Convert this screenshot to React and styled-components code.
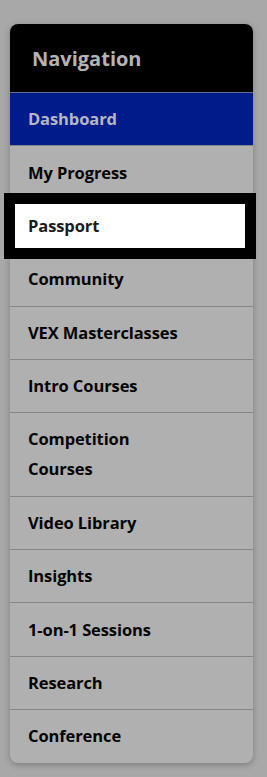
import React from 'react';
import styled, { createGlobalStyle } from 'styled-components';

const GlobalStyle = createGlobalStyle`
  html, body {
    margin: 0;
    padding: 0;
    background: #a8a8a8;
  }
  body {
    font-family: "Open Sans", "Liberation Sans", sans-serif;
  }
`;

const Page = styled.div`
  padding: 24px 14px 14px 10px;
`;

const Card = styled.nav`
  width: 243px;
  border-radius: 8px;
  background: #b0b0b0;
  box-shadow: 0 2px 6px rgba(0, 0, 0, 0.25);
`;

const Header = styled.div`
  height: 69px;
  display: flex;
  align-items: center;
  padding-left: 22px;
  background: #000;
  color: #b4b4b4;
  font-size: 20px;
  font-weight: 700;
  border-radius: 8px 8px 0 0;
  border-bottom: 1px solid #6a6a8a;
  box-sizing: border-box;
`;

const List = styled.ul`
  list-style: none;
  margin: 0;
  padding: 0;
`;

const Item = styled.li`
  position: relative;
  padding: 11.2px 60px 11.2px 18px;
  line-height: 30px;
  font-size: 16.5px;
  font-weight: 700;
  letter-spacing: -0.1px;
  color: ${({ active }) => (active ? '#b6b6c2' : '#050505')};
  background: ${({ active }) => (active ? '#001c8a' : 'transparent')};
  border-bottom: ${({ last }) => (last ? 'none' : '1px solid #858585')};
  border-radius: ${({ last }) => (last ? '0 0 8px 8px' : '0')};
`;

const Spotlight = styled.div`
  position: absolute;
  top: 4px;
  bottom: 4px;
  left: 5px;
  right: 8px;
  background: #fff;
  outline: 11px solid #000;
  display: flex;
  align-items: center;
  padding-left: 13px;
  color: #1c1c1c;
`;

const links = [
  'Dashboard',
  'My Progress',
  'Passport',
  'Community',
  'VEX Masterclasses',
  'Intro Courses',
  'Competition Courses',
  'Video Library',
  'Insights',
  '1-on-1 Sessions',
  'Research',
  'Conference'
];

const App = () => (
  <>
    <GlobalStyle />
    <Page>
      <Card>
        <Header>Navigation</Header>
        <List>
          {links.map((label, i) => (
            <Item key={label} active={i === 0} last={i === links.length - 1}>
              {label}
              {label === 'Passport' && <Spotlight>{label}</Spotlight>}
            </Item>
          ))}
        </List>
      </Card>
    </Page>
  </>
);

export default App;
